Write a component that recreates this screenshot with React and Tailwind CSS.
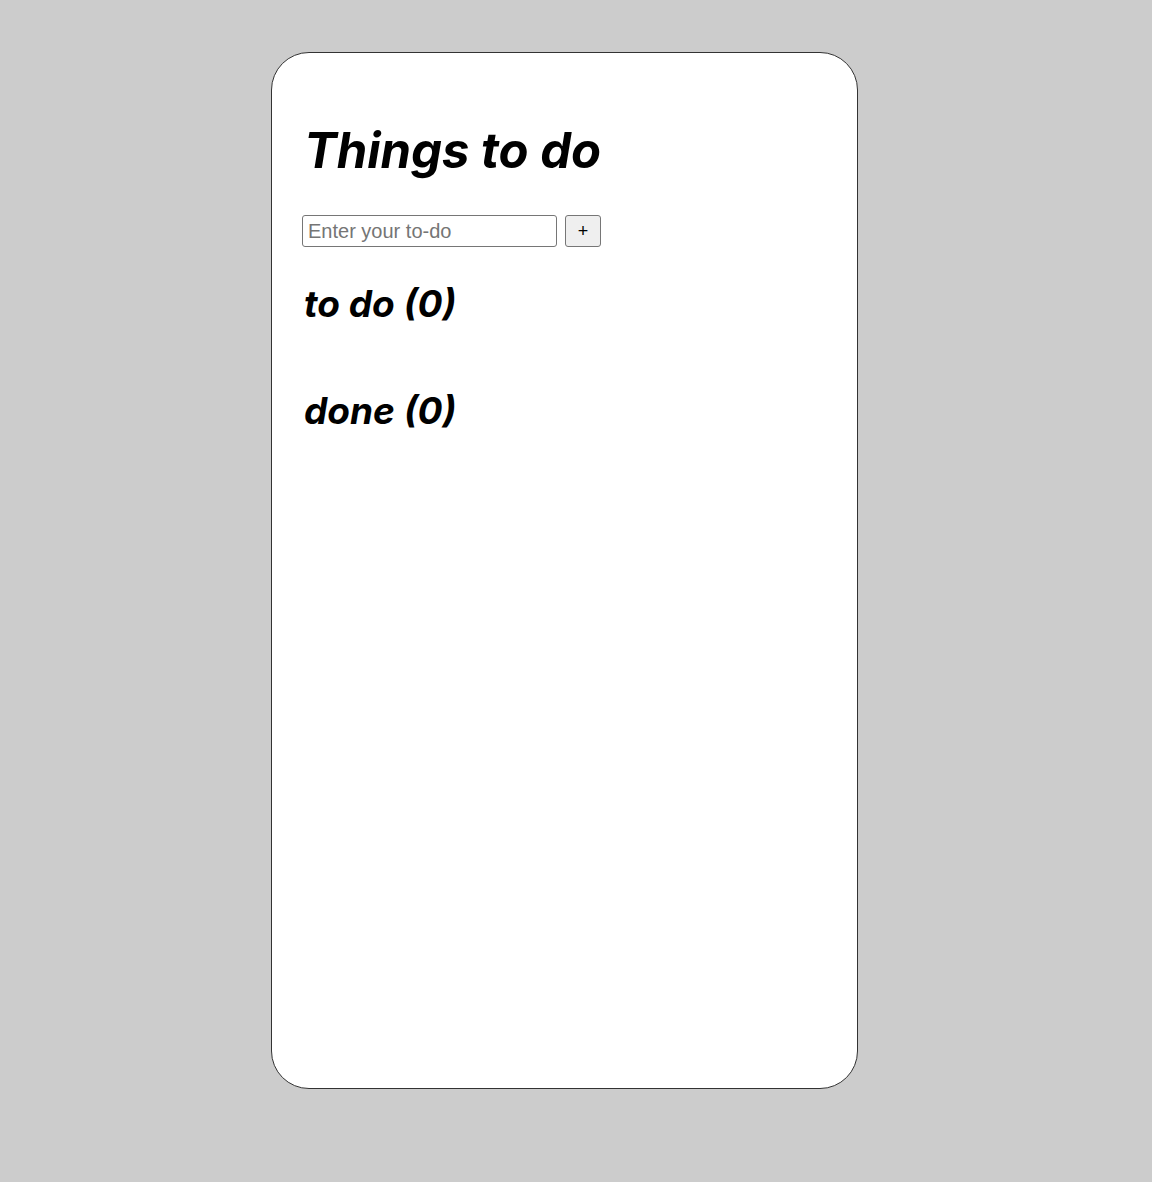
import { useState } from 'react';

const headingFont = "font-['Inter','Noto_Sans_CJK_KR',sans-serif]";

function App() {
  const [text, setText] = useState('');
  const [todos, setTodos] = useState([]);
  const [done, setDone] = useState([]);

  const addTodo = () => {
    if (!text.trim()) return;
    setTodos(prev => [...prev, text.trim()]);
    setText('');
  };

  return (
    <div className="min-h-[1182px] bg-[#cccccc] pt-[52px]">
      <div className="ml-[271px] w-[587px] h-[1037px] bg-white border border-[#333] rounded-[38px] px-[30px] pt-[73px]">
        <h1 className={`${headingFont} text-[49px] font-bold italic leading-none mb-[40px] pl-[2px] text-black`}>
          Things to do
        </h1>

        {/* Input row */}
        <div className="flex gap-2 items-center font-['Liberation_Sans',Arial,sans-serif]">
          <input
            value={text}
            onChange={e => setText(e.target.value)}
            placeholder="Enter your to-do"
            className="w-[255px] h-[32px] border border-[#767676] rounded-[3px] px-[5px] text-[20px] placeholder:text-[#757575] outline-none"
          />
          <button
            onClick={addTodo}
            className="w-[36px] h-[32px] bg-[#efefef] border border-[#767676] rounded-[3px] text-[18px] text-black"
          >
            +
          </button>
        </div>

        <h2 className={`${headingFont} text-[37px] font-bold italic leading-none mt-[38px] pl-[2px] text-black`}>
          to do ({todos.length})
        </h2>
        <ul className="min-h-[70px]">
          {todos.map((t, i) => (
            <li key={i}>{t}</li>
          ))}
        </ul>

        <h2 className={`${headingFont} text-[37px] font-bold italic leading-none pl-[2px] text-black`}>
          done ({done.length})
        </h2>
        <ul>
          {done.map((t, i) => (
            <li key={i}>{t}</li>
          ))}
        </ul>
      </div>
    </div>
  );
}

export default App;
